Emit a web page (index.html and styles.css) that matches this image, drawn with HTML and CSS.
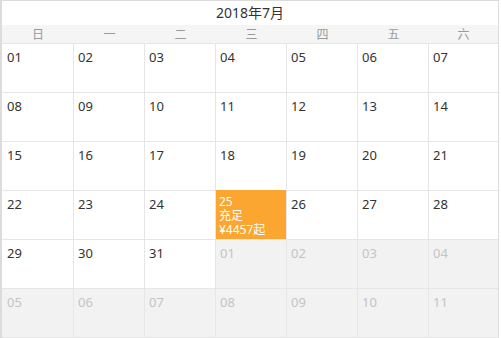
FILE: index.html
```html
<!DOCTYPE html>
<html lang="zh-CN">
<head>
<meta charset="utf-8">
<title>日历</title>
<link rel="stylesheet" href="styles.css">
</head>
<body>
<div class="calendar">
  <div class="title">2018年7月</div>
  <div class="weekdays">
    <div>日</div><div>一</div><div>二</div><div>三</div><div>四</div><div>五</div><div>六</div>
  </div>
  <div class="days">
    <div class="day">01</div><div class="day">02</div><div class="day">03</div><div class="day">04</div><div class="day">05</div><div class="day">06</div><div class="day">07</div>
    <div class="day">08</div><div class="day">09</div><div class="day">10</div><div class="day">11</div><div class="day">12</div><div class="day">13</div><div class="day">14</div>
    <div class="day">15</div><div class="day">16</div><div class="day">17</div><div class="day">18</div><div class="day">19</div><div class="day">20</div><div class="day">21</div>
    <div class="day">22</div><div class="day">23</div><div class="day">24</div>
    <div class="day active"><span>25</span><span>充足</span><span>¥4457起</span></div>
    <div class="day">26</div><div class="day">27</div><div class="day">28</div>
    <div class="day">29</div><div class="day">30</div><div class="day">31</div><div class="day other">01</div><div class="day other">02</div><div class="day other">03</div><div class="day other">04</div>
    <div class="day other">05</div><div class="day other">06</div><div class="day other">07</div><div class="day other">08</div><div class="day other">09</div><div class="day other">10</div><div class="day other">11</div>
  </div>
</div>
</body>
</html>
```

FILE: styles.css
```css
html, body {
  margin: 0;
  padding: 0;
  background: #fff;
}
body {
  font-family: "Noto Sans", "Noto Sans CJK SC", sans-serif;
  color: #333;
}
.calendar {
  width: 496px;
  border: 1px solid #dcdcdc;
  border-left-width: 2px;
  border-bottom: none;
}
.title {
  height: 24px;
  line-height: 24px;
  text-align: center;
  font-size: 14px;
  color: #333;
}
.weekdays {
  display: grid;
  grid-template-columns: 72px repeat(5, 71px) 69px;
  height: 18px;
  line-height: 18px;
  background: #f5f5f5;
  border-bottom: 1px solid #e6e6e6;
  font-family: "Noto Sans CJK SC", sans-serif;
  font-size: 12px;
  color: #9a9a9a;
  text-align: center;
}
.days {
  display: grid;
  grid-template-columns: 72px repeat(5, 71px) 69px;
  grid-auto-rows: 49px;
}
.day {
  box-sizing: border-box;
  border-right: 1px solid #e6e6e6;
  border-bottom: 1px solid #e6e6e6;
  padding: 4px 0 0 4px;
  font-size: 13px;
  line-height: 18px;
  color: #333;
}
.day:nth-child(7n+1) {
  padding-left: 5px;
}
.day:nth-child(7n) {
  border-right: none;
}
.day.other {
  background: #f2f2f2;
  color: #c4c4c4;
}
.day.active {
  background: #fba631;
  color: #fff;
  margin-top: -1px;
  padding: 5px 0 0 3px;
  font-size: 12px;
  line-height: 14px;
  display: flex;
  flex-direction: column;
  border-bottom: 1px solid #e6e6e6;
}
```
